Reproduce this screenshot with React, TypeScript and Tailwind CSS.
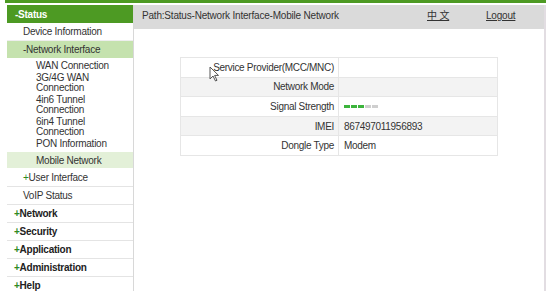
import React from 'react';

const font = { fontFamily: '"Liberation Sans", "Noto Sans CJK SC", sans-serif' };

type SubItem = { lines: string[] };

const subItems: SubItem[] = [
  { lines: ['WAN Connection'] },
  { lines: ['3G/4G WAN', 'Connection'] },
  { lines: ['4in6 Tunnel', 'Connection'] },
  { lines: ['6in4 Tunnel', 'Connection'] },
  { lines: ['PON Information'] },
];

const topMenus = ['Network', 'Security', 'Application', 'Administration', 'Help'];

const rows: { label: string; value: React.ReactNode }[] = [
  { label: 'Service Provider(MCC/MNC)', value: '' },
  { label: 'Network Mode', value: '' },
  {
    label: 'Signal Strength',
    value: (
      <span className="flex items-center gap-[1px]">
        {[0, 1, 2, 3, 4].map((i) => (
          <span
            key={i}
            className={'inline-block w-[6px] h-[3px] ' + (i < 3 ? 'bg-[#3cb43c]' : 'bg-[#cfcfcf]')}
          />
        ))}
      </span>
    ),
  },
  { label: 'IMEI', value: '867497011956893' },
  { label: 'Dongle Type', value: 'Modem' },
];

const Sidebar: React.FC = () => (
  <aside className="w-[127px] ml-[7px] shrink-0 border-r border-[#d8d8d8] bg-white text-[10px] text-[#333] tracking-[-0.25px]">
    <div className="h-[18px] bg-[#4d9a23] text-white font-bold flex items-center pl-[8px]">-Status</div>
    <div className="h-[18px] flex items-center pl-[16px] border-b border-[#eeeeee]">Device Information</div>
    <div className="h-[17px] flex items-center pl-[16px] bg-[#c5e2ae]">-Network Interface</div>
    <div className="pt-[2px] pb-[2px]">
      {subItems.map((s) => (
        <div key={s.lines[0]} className="py-[1px] pl-[29px] leading-[10px]">
          {s.lines.map((l) => (
            <div key={l}>{l}</div>
          ))}
        </div>
      ))}
    </div>
    <div className="h-[16px] flex items-center pl-[29px] bg-[#e3f0d8]">Mobile Network</div>
    <div className="h-[19px] flex items-center pl-[16px] border-b border-[#e4e4e4]">
      <span className="text-[#2f8a1e]">+</span>User Interface
    </div>
    <div className="h-[18px] flex items-center pl-[16px] border-b border-[#e4e4e4]">VoIP Status</div>
    {topMenus.map((m) => (
      <div key={m} className="h-[18px] flex items-center pl-[7px] font-bold text-[#222] border-b border-[#e4e4e4]">
        <span className="text-[#2f8a1e]">+</span>
        {m}
      </div>
    ))}
  </aside>
);

const Cursor: React.FC = () => (
  <svg className="absolute left-[209px] top-[66px]" width="11" height="16" viewBox="0 0 11 16">
    <path d="M1 1 L1 13 L4 10 L6.5 15 L8 14.3 L5.6 9.4 L9.5 9.4 Z" fill="#fff" stroke="#555" strokeWidth="1" />
  </svg>
);

const App: React.FC = () => {
  return (
    <div className="w-[556px] h-[291px] overflow-hidden bg-white relative" style={font}>
      <div className="ml-[5px] w-[541px] h-[3px] bg-[#4d9a23]" />
      <div className="h-[2px]" />
      <div className="flex w-[546px] h-[286px]">
        <Sidebar />
        <main className="flex-1 border-r-2 border-[#e2dde2] flex flex-col">
          <div className="h-[24px] bg-[#dadada] flex items-start pt-[3px] text-[10px] text-[#333] pl-[8px] tracking-[-0.2px]">
            <span className="w-[285px]">Path:Status-Network Interface-Mobile Network</span>
            <span className="underline w-[59px]">中 文</span>
            <span className="underline">Logout</span>
          </div>
          <div className="pt-[28px] pl-[46px]">
            <table className="w-[318px] border-collapse text-[10px] text-[#333] tracking-[-0.3px]">
              <tbody>
                {rows.map((r, i) => (
                  <tr key={r.label} className={i % 2 === 1 ? 'bg-[#f3f3f3]' : 'bg-white'}>
                    <td className="w-[158px] h-[19.6px] border border-[#e6e6e6] text-right pr-[4px] py-0">
                      {r.label}
                    </td>
                    <td className="border border-[#e6e6e6] pl-[5px] py-0">{r.value}</td>
                  </tr>
                ))}
              </tbody>
            </table>
          </div>
        </main>
      </div>
      <Cursor />
    </div>
  );
};

export default App;
